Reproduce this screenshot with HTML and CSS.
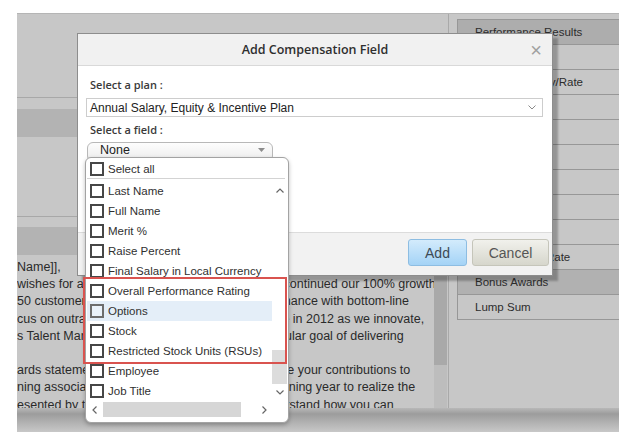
FILE: index.html
```html
<!DOCTYPE html>
<html lang="en">
<head>
  <meta charset="UTF-8" />
  <title>Add Compensation Field</title>
  <link rel="stylesheet" href="styles.css">
</head>
<body>
  <div class="app">
    <div class="main">
      <div class="left-panel">
        <div class="section section-top"></div>
        <div class="band"></div>
        <div class="section section-mid"></div>
        <div class="band"></div>
        <div class="letter-area">
          <div class="letter">
            <p>Name]],<br>
            wishes for another successful year. We all have continued our 100% growth<br>
            50 customers last quarter, plus our steady governance with bottom-line<br>
            cus on outrageous customer service will continue in 2012 as we innovate,<br>
            s Talent Management strives towards their particular goal of delivering</p>
            <p>ards statement is designed to help you clearly see your contributions to<br>
            ning associates, so we look to the upcoming planning year to realize the<br>
            esented by the Rewards teams to help you understand how you can</p>
          </div>
          <div class="letter-scroll"><div class="letter-thumb"></div></div>
        </div>
      </div>
      <div class="right-panel">
        <ul class="field-list">
          <li class="field-head">Performance Results</li>
          <li>Base Salary</li>
          <li>Previous Salary/Rate</li>
          <li>Pay Grade</li>
          <li>Salary Range</li>
          <li>Merit</li>
          <li>Promotion</li>
          <li>Equity</li>
          <li>Target Bonus</li>
          <li>Target Bonus Rate</li>
          <li class="active">Bonus Awards</li>
          <li>Lump Sum</li>
        </ul>
      </div>
    </div>
    <div class="footer-bar"></div>
  </div>

  <div class="modal">
    <div class="modal-header">
      <span class="modal-title">Add Compensation Field</span>
      <span class="modal-close">&times;</span>
    </div>
    <div class="modal-body">
      <label class="field-label">Select a plan :</label>
      <div class="plan-select">
        <span>Annual Salary, Equity &amp; Incentive Plan</span>
        <svg width="8" height="5" viewBox="0 0 8 5"><path d="M0.5 0.5 L4 4 L7.5 0.5" fill="none" stroke="#8a8a8a" stroke-width="1"/></svg>
      </div>
      <label class="field-label">Select a field :</label>
      <div class="field-button">
        <span>None</span>
        <svg width="7" height="4" viewBox="0 0 7 4"><path d="M0 0 H7 L3.5 4 Z" fill="#8c8c8c"/></svg>
      </div>
    </div>
    <div class="modal-footer">
      <button class="btn btn-add">Add</button>
      <button class="btn btn-cancel">Cancel</button>
    </div>

    <div class="field-popup">
      <div class="select-all"><span class="check"></span>Select all</div>
      <div class="list-wrap">
        <div class="items">
          <div class="item"><span class="check"></span>Last Name</div>
          <div class="item"><span class="check"></span>Full Name</div>
          <div class="item"><span class="check"></span>Merit %</div>
          <div class="item"><span class="check"></span>Raise Percent</div>
          <div class="item"><span class="check"></span>Final Salary in Local Currency</div>
          <div class="item"><span class="check"></span>Overall Performance Rating</div>
          <div class="item hover"><span class="check"></span>Options</div>
          <div class="item"><span class="check"></span>Stock</div>
          <div class="item"><span class="check"></span>Restricted Stock Units (RSUs)</div>
          <div class="item"><span class="check"></span>Employee</div>
          <div class="item"><span class="check"></span>Job Title</div>
        </div>
        <div class="vscroll">
          <div class="arrow arrow-up"><svg width="8" height="5" viewBox="0 0 8 5"><path d="M0.5 4.5 L4 1 L7.5 4.5" fill="none" stroke="#666" stroke-width="1.2"/></svg></div>
          <div class="vtrack"></div>
          <div class="vthumb"></div>
          <div class="arrow arrow-down"><svg width="8" height="5" viewBox="0 0 8 5"><path d="M0.5 0.5 L4 4 L7.5 0.5" fill="none" stroke="#666" stroke-width="1.2"/></svg></div>
        </div>
      </div>
      <div class="hscroll">
        <div class="arrow"><svg width="5" height="8" viewBox="0 0 5 8"><path d="M4.5 0.5 L1 4 L4.5 7.5" fill="none" stroke="#666" stroke-width="1.2"/></svg></div>
        <div class="htrack"><div class="hthumb"></div></div>
        <div class="arrow"><svg width="5" height="8" viewBox="0 0 5 8"><path d="M0.5 0.5 L4 4 L0.5 7.5" fill="none" stroke="#666" stroke-width="1.2"/></svg></div>
        <div class="corner"></div>
      </div>
    </div>
  </div>

  <div class="highlight-box"></div>
</body>
</html>
```

FILE: styles.css
```css
* { box-sizing: border-box; }
body { margin: 0; background: #fff; font-family: "Liberation Sans", Arial, sans-serif; position: relative; height: 441px; overflow: hidden; }

.app {
  margin: 13px 11px 0 17px;
  width: 602px;
  background: #c7c7c7;
  border-top: 1px solid #b5b5b5;
}
.main { display: flex; height: 394px; }

.left-panel {
  width: 432px;
  display: flex; flex-direction: column;
  border-right: 1px solid #a9a9a9;
}
.section { border-bottom: 1px solid #a8a8a8; flex-shrink: 0; }
.section-top { height: 84px; margin-bottom: 11px; }
.section-mid { height: 80px; margin-bottom: 10px; }
.band { height: 28px; background: #b3b3b3; flex-shrink: 0; }

.letter-area { flex: 1; display: flex; overflow: hidden; }
.letter {
  flex: 1; overflow: hidden;
  padding-top: 4px;
  font-size: 12.5px; line-height: 17.2px;
  color: #2a2a2a; white-space: nowrap;
}
.letter p { margin: 0 0 17.2px; }
.letter-scroll { width: 13px; background: #bdbdbd; margin-right: 1px; }
.letter-thumb { height: 110px; background: #a9a9a9; }

.right-panel { flex: 1; margin-left: 8px; padding-top: 5px; }
.field-list {
  list-style: none; margin: 0; padding: 0;
  border-left: 1px solid #979797;
  border-top: 1px solid #979797;
}
.field-list li {
  height: 25px; line-height: 24px;
  padding-left: 17px;
  font-size: 11.5px; color: #2c2c2c;
  border-bottom: 1px solid #979797;
  white-space: nowrap; overflow: hidden;
}
.field-list .field-head { background: #adadad; }
.field-list .active { background: #b1b1b1; }

.footer-bar {
  height: 24px;
  background: linear-gradient(#b8b8b8 0, #9c9c9c 25%, #b4b4b4 65%, #c8c8c8 100%);
}

/* dialog */
.modal {
  position: absolute; left: 77px; top: 33px;
  width: 476px;
  background: #fff;
  border: 1px solid #8d8d8d;
  box-shadow: 5px 5px 2px rgba(0, 0, 0, 0.25);
  font-family: "Open Sans", "Liberation Sans", sans-serif;
}
.modal-header {
  height: 32px;
  background: #f1f1f1;
  border-bottom: 1px solid #d9d9d9;
  display: flex; align-items: center; justify-content: center;
  position: relative;
}
.modal-title { font-size: 12.5px; font-weight: 600; color: #2e2e2e; }
.modal-close {
  position: absolute; right: 10px; top: 5px;
  font-size: 20px; color: #a0a0a0; font-family: "Liberation Sans", sans-serif;
}
.modal-body { height: 166px; padding: 12px 9px 0 8px; }
.field-label {
  display: block; padding-left: 4px;
  font-size: 11px; font-weight: 600; line-height: 14px; color: #3a3a3a;
}
.plan-select {
  margin: 6px 0 6px;
  height: 19px; width: 457px;
  border: 1px solid #cdcdcd;
  display: flex; align-items: center; justify-content: space-between;
  padding: 0 6px 0 3px;
  font-family: "Liberation Sans", sans-serif; font-size: 12px; color: #222;
}
.field-button {
  margin: 5px 0 0 1px;
  width: 186px; height: 20px;
  border: 1px solid #b8b8b8; border-radius: 6px;
  background: linear-gradient(#fdfdfd, #ececec);
  display: flex; align-items: flex-start; justify-content: space-between;
  padding: 0 7px 0 12px;
  font-family: "Liberation Sans", sans-serif; font-size: 12.5px; line-height: 15px; color: #222;
}
.field-button svg { margin-top: 5px; }

.modal-footer {
  height: 43px;
  background: #f2f2f2;
  border-top: 1px solid #dcdcdc;
  display: flex; justify-content: flex-end; align-items: flex-start;
  gap: 5px; padding: 6px 3px 0 0;
}
.btn {
  height: 27px; border-radius: 3px;
  font-family: "Liberation Sans", sans-serif; font-size: 14px;
  padding: 0;
}
.btn-add {
  width: 59px; color: #3d4a55;
  background: linear-gradient(#d3ebfc, #a4d3f6);
  border: 1px solid #8dbde2;
}
.btn-cancel {
  width: 77px; color: #555;
  background: linear-gradient(#f1f1ec, #d6d6cc);
  border: 1px solid #c5c5ba;
}

/* field dropdown */
.field-popup {
  position: absolute; left: 7px; top: 123px;
  width: 204px; height: 266px;
  background: #fff;
  border: 1px solid #a3a3a3; border-radius: 6px;
  box-shadow: 0 2px 4px rgba(0, 0, 0, 0.25);
  padding: 3px 1px 5px;
  font-family: "Liberation Sans", sans-serif; font-size: 11.5px; color: #303030;
}
.check {
  width: 14px; height: 14px; flex-shrink: 0;
  border: 2px solid #474747; background: #fff;
}
.select-all, .item {
  display: flex; align-items: center; gap: 4px;
  padding-left: 3px; white-space: nowrap;
}
.select-all {
  height: 18px; margin: 0 2px 2px 0;
  border-bottom: 1px solid #d3d3d3;
  padding-bottom: 1px;
}
.list-wrap { display: flex; height: 220px; }
.items { flex: 1; overflow: hidden; }
.item { height: 20px; }
.item.hover { background: #e4eef8; }
.item.hover .check { border-color: #6d6d6d; background: #eaf2fa; }

.vscroll { width: 15px; display: flex; flex-direction: column; }
.arrow { display: flex; align-items: center; justify-content: center; }
.arrow-up { height: 18px; }
.vtrack { flex: 1; }
.vthumb { height: 34px; background: #dcdcdc; }
.arrow-down { height: 17px; }

.hscroll { display: flex; height: 15px; margin-top: 1px; }
.hscroll .arrow { width: 15px; }
.htrack { flex: 1; padding-left: 1px; }
.hthumb { width: 138px; height: 100%; background: #d6d6d6; }
.corner { width: 15px; }

.highlight-box {
  position: absolute; left: 83px; top: 277px;
  width: 204px; height: 87px;
  border: 2px solid #d9534f;
}
```
